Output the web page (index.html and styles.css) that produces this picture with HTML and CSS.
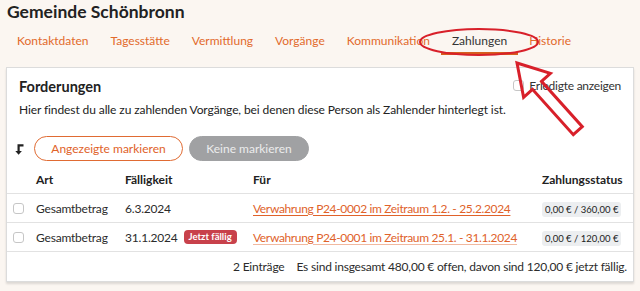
FILE: index.html
```html
<!DOCTYPE html>
<html lang="de">
<head>
<meta charset="utf-8">
<link rel="stylesheet" href="styles.css">
</head>
<body>
<div class="page">
  <h1 class="title">Gemeinde Schönbronn</h1>
  <nav class="tabs">
    <a class="tab">Kontaktdaten</a>
    <a class="tab">Tagesstätte</a>
    <a class="tab">Vermittlung</a>
    <a class="tab">Vorgänge</a>
    <a class="tab">Kommunikation</a>
    <a class="tab active">Zahlungen</a>
    <a class="tab">Historie</a>
  </nav>
  <section class="card">
    <div class="card-head">
      <h2 class="card-title">Forderungen</h2>
      <label class="toggle"><span class="box"></span>Erledigte anzeigen</label>
    </div>
    <p class="desc">Hier findest du alle zu zahlenden Vorgänge, bei denen diese Person als Zahlender hinterlegt ist.</p>
    <div class="actions">
      <svg class="lvl" width="9" height="11" viewBox="0 0 9 11"><path d="M8.5 1.3H3.6V8" fill="none" stroke="#222" stroke-width="2.2"/><path d="M0.3 7H6.9L3.6 10.8Z" fill="#222"/></svg>
      <button class="btn btn-outline">Angezeigte markieren</button>
      <button class="btn btn-grey">Keine markieren</button>
    </div>
    <div class="table">
      <div class="row head">
        <div class="c-chk"></div>
        <div class="c-art">Art</div>
        <div class="c-due">Fälligkeit</div>
        <div class="c-for">Für</div>
        <div class="c-st">Zahlungsstatus</div>
      </div>
      <div class="row">
        <div class="c-chk"><span class="box"></span></div>
        <div class="c-art">Gesamtbetrag</div>
        <div class="c-due">6.3.2024</div>
        <div class="c-for"><a class="link">Verwahrung P24-0002 im Zeitraum 1.2. - 25.2.2024</a></div>
        <div class="c-st"><span class="pill">0,00 € / 360,00 €</span></div>
      </div>
      <div class="row">
        <div class="c-chk"><span class="box"></span></div>
        <div class="c-art">Gesamtbetrag</div>
        <div class="c-due">31.1.2024 <span class="badge">Jetzt fällig</span></div>
        <div class="c-for"><a class="link light">Verwahrung P24-0001 im Zeitraum 25.1. - 31.1.2024</a></div>
        <div class="c-st"><span class="pill">0,00 € / 120,00 €</span></div>
      </div>
      <div class="foot">
        <span>2 Einträge</span>
        <span>Es sind insgesamt 480,00 € offen, davon sind 120,00 € jetzt fällig.</span>
      </div>
    </div>
  </section>
  <svg class="annot" width="640" height="291" viewBox="0 0 640 291">
    <ellipse cx="479" cy="42" rx="59" ry="13" fill="none" stroke="#d8202a" stroke-width="2"/>
    <polygon points="517,63 550.4,73.3 541.5,81.3 582.3,126.7 573.3,134.7 532.5,89.3 523.6,97.3" fill="none" stroke="#d8202a" stroke-width="3" stroke-linejoin="miter"/>
  </svg>
</div>
</body>
</html>
```
FILE: styles.css
```css
* { box-sizing: border-box; }
html, body { margin: 0; padding: 0; }
body {
  background: #fbf6f1;
  font-family: Lato, "Noto Sans", sans-serif;
  font-size: 12px;
  color: #2b2b2b;
  width: 640px;
  height: 291px;
  overflow: hidden;
  white-space: nowrap;
}
.page { position: relative; padding: 0 6px; height: 291px; }
.title {
  margin: 0;
  padding: 0 0 0 1px;
  font-size: 17.5px;
  font-weight: 700;
  line-height: 24px;
  color: #222;
}
.tabs {
  display: flex;
  margin-top: 6px;
  height: 25px;
}
.tab {
  padding: 0 11px;
  line-height: 22px;
  color: #e26a2c;
  border-bottom: 3px solid transparent;
  height: 25px;
}
.tab.active { color: #333; border-bottom-color: #d6601e; }
.card {
  margin-top: 12px;
  background: #fff;
  border: 1px solid #dcdcdc;
  box-shadow: 0 2px 2px rgba(0,0,0,0.12);
  height: 215px;
}
.card-head {
  display: flex;
  justify-content: space-between;
  align-items: center;
  padding: 8px 12px 0 12px;
  height: 29px;
}
.card-title { margin: 0; font-size: 14.5px; font-weight: 700; color: #222; }
.toggle { display: flex; align-items: center; gap: 5px; color: #333; margin-top: -3px; letter-spacing: -0.25px; }
.box {
  display: inline-block;
  width: 11px;
  height: 11px;
  border: 1px solid #c6c6c6;
  border-radius: 3px;
  background: #fff;
}
.desc { margin: 5px 0 0 12px; line-height: 16px; color: #222; letter-spacing: -0.1px; }
.actions {
  display: flex;
  align-items: center;
  margin: 18px 0 0 8px;
  gap: 6px;
}
.lvl { margin-right: 4px; margin-top: 1px; }
.btn {
  height: 25px;
  border-radius: 13px;
  font-family: inherit;
  font-size: 12px;
  padding: 0;
  white-space: nowrap;
}
.btn-outline { background: #fff; border: 1px solid #e06b33; color: #e0622a; width: 149px; }
.btn-grey { background: #a0a1a3; border: 1px solid #a0a1a3; color: #ececec; width: 120px; }
.table { margin-top: 4px; }
.row {
  display: flex;
  align-items: center;
  height: 29px;
  border-bottom: 1px solid #e2e2e2;
  letter-spacing: -0.2px;
}
.row.head { font-weight: 700; color: #222; letter-spacing: 0; }
.c-chk { width: 29px; padding-left: 6px; display: flex; }
.c-art { width: 89px; }
.c-due { width: 128px; display: flex; align-items: center; gap: 6px; }
.c-for { width: 289px; }
.c-st { flex: 1; }
.link { color: #e0622a; text-decoration: underline; text-underline-offset: 2px; letter-spacing: -0.35px; }
.link.light { text-decoration-color: #f1b9a0; }
.badge {
  background: #c8414b;
  color: #fff;
  font-size: 9.5px;
  font-weight: 700;
  padding: 1px 5px;
  border-radius: 4px;
  line-height: 12px;
  letter-spacing: 0;
}
.pill {
  background: #eceef0;
  font-size: 9.5px;
  padding: 2px 3px;
  border-radius: 3px;
  color: #222;
  letter-spacing: 0;
}
.foot {
  display: flex;
  justify-content: flex-end;
  align-items: center;
  gap: 12px;
  height: 28px;
  padding-right: 6px;
  letter-spacing: -0.2px;
}
.annot { position: absolute; left: 0; top: 0; pointer-events: none; }
```
